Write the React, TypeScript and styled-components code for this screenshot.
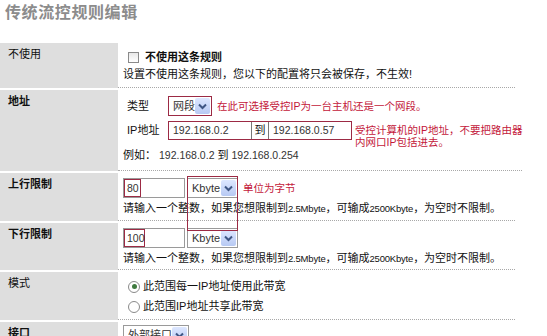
import styled, { createGlobalStyle } from "styled-components";

const GlobalStyle = createGlobalStyle`
  body {
    margin: 0;
    background: #fff;
    font-family: "Liberation Sans", "Noto Sans CJK SC", sans-serif;
    font-size: 11px;
    color: #111;
  }
`;

const MAROON = "#9c2a44";
const RED = "#c3173a";

const Page = styled.div`
  width: 547px;
  height: 336px;
  overflow: hidden;
`;

const Title = styled.h1`
  margin: 0;
  height: 43px;
  box-sizing: border-box;
  padding: 3px 5px 0;
  font-size: 16px;
  line-height: 20px;
  font-weight: bold;
  color: #8c8c8c;
  letter-spacing: 0.6px;
`;

const Table = styled.div`
  width: 515px;
  display: flex;
  flex-direction: column;
  gap: 2px;
`;

const Row = styled.div<{ $h: number }>`
  display: grid;
  grid-template-columns: 118px 1fr;
  height: ${(p) => p.$h}px;
`;

const Label = styled.div<{ $bold?: boolean }>`
  background: #dedede;
  padding: 4px 8px 0;
  line-height: 15px;
  font-weight: ${(p) => (p.$bold ? "bold" : "normal")};
`;

const Content = styled.div<{ $top: number }>`
  border-bottom: 1px dotted #a8a8a8;
  padding: ${(p) => p.$top}px 0 0 5px;
  display: flex;
  flex-direction: column;
  line-height: 15px;
`;

const Line = styled.div<{ $h?: number; $mt?: number; $pl?: number }>`
  display: flex;
  align-items: center;
  height: ${(p) => p.$h ?? 15}px;
  margin-top: ${(p) => p.$mt ?? 0}px;
  padding-left: ${(p) => p.$pl ?? 0}px;
  white-space: nowrap;
`;

const Strong = styled.span`
  font-weight: bold;
`;

const Small = styled.span`
  font-size: 9.5px;
  letter-spacing: -0.2px;
`;

const Num = styled.span`
  font-size: 10.5px;
  color: #333;
  margin: 0 3px;
`;

const Note = styled.span<{ $ml?: number }>`
  color: ${RED};
  font-size: 10.5px;
  margin-left: ${(p) => p.$ml ?? 5}px;
  line-height: 13px;
`;

const Checkbox = styled.span`
  width: 11px;
  height: 11px;
  border: 1px solid #8a8a8a;
  background: linear-gradient(#e8e8e8, #fff);
  margin-right: 6px;
  box-sizing: border-box;
`;

const Radio = styled.span<{ $on?: boolean }>`
  width: 12px;
  height: 12px;
  border-radius: 50%;
  border: 1px solid #8a8a8a;
  box-sizing: border-box;
  background: #fff;
  margin-right: 3px;
  display: flex;
  align-items: center;
  justify-content: center;
  &::after {
    content: "";
    width: 5px;
    height: 5px;
    border-radius: 50%;
    background: ${(p) => (p.$on ? "#3f7a3f" : "transparent")};
  }
`;

const FieldName = styled.span`
  width: 41px;
  padding-left: 4px;
`;

const Select = styled.div<{ $w: number; $mark?: boolean; $ml?: number }>`
  position: relative;
  width: ${(p) => p.$w}px;
  height: 20px;
  margin-left: ${(p) => p.$ml ?? 0}px;
  box-sizing: border-box;
  border: 1px solid ${(p) => (p.$mark ? MAROON : "#9a9a9a")};
  display: flex;
  align-items: center;
  justify-content: space-between;
  padding: 0 1px 0 4px;
  background: #fff;
  font-size: 11px;
  color: #333;
`;

/* red marker drawn over the screenshot, running past the row below */
const Annotation = styled.span`
  position: absolute;
  left: -1px;
  right: -1px;
  top: -3px;
  height: 53px;
  border: 1px solid ${MAROON};
  pointer-events: none;
  z-index: 2;
`;

const ArrowBtn = styled.span`
  width: 15px;
  height: 16px;
  background: linear-gradient(#dde7ff, #b7c9f3);
  border-radius: 2px;
  display: flex;
  align-items: center;
  justify-content: center;
`;

const Chevron = () => (
  <svg width="9" height="7" viewBox="0 0 9 7">
    <path d="M1 1.5 L4.5 5 L8 1.5" fill="none" stroke="#3f5684" strokeWidth="2" />
  </svg>
);

const TextInput = styled.div<{ $w: number }>`
  width: ${(p) => p.$w}px;
  height: 20px;
  box-sizing: border-box;
  border: 1px solid #9a9a9a;
  display: flex;
  align-items: stretch;
  font-size: 10.5px;
  color: #333;
  background: #fff;
`;

const Marked = styled.span<{ $w: number }>`
  width: ${(p) => p.$w}px;
  border: 1px solid ${MAROON};
  display: flex;
  align-items: center;
  padding-left: 2px;
  box-sizing: border-box;
`;

const IpGroup = styled.div`
  display: flex;
  height: 19px;
  border: 1px solid ${MAROON};
  box-sizing: border-box;
  background: #fff;
`;

const IpField = styled.span`
  width: 82px;
  display: flex;
  align-items: center;
  padding-left: 4px;
  box-sizing: border-box;
  font-size: 10.5px;
  color: #333;
`;

const To = styled.span`
  width: 16px;
  border-left: 1px solid #777;
  border-right: 1px solid #777;
  display: flex;
  align-items: center;
  justify-content: center;
`;

const NoteBlock = styled.div`
  color: ${RED};
  font-size: 10.5px;
  line-height: 12px;
  margin-left: 3px;
  margin-top: 3px;
  align-self: flex-start;
`;

const Limit = ({ value, mark }: { value: string; mark: number }) => (
  <TextInput $w={62}>
    <Marked $w={mark}>{value}</Marked>
  </TextInput>
);

const Hint = () => (
  <Line $mt={3}>
    请输入一个整数，如果您想限制到<Small>2.5Mbyte</Small>，可输成
    <Small>2500Kbyte</Small>，为空时不限制。
  </Line>
);

export default function App() {
  return (
    <>
      <GlobalStyle />
      <Page>
        <Title>传统流控规则编辑</Title>
        <Table>
          <Row $h={45}>
            <Label>不使用</Label>
            <Content $top={7}>
              <Line $pl={5}>
                <Checkbox />
                <Strong>不使用这条规则</Strong>
              </Line>
              <Line $mt={2}>设置不使用这条规则，您以下的配置将只会被保存，不生效!</Line>
            </Content>
          </Row>

          <Row $h={81}>
            <Label $bold>地址</Label>
            <Content $top={6}>
              <Line $h={20}>
                <FieldName>类型</FieldName>
                <Select $w={44} $mark>
                  网段
                  <ArrowBtn>
                    <Chevron />
                  </ArrowBtn>
                </Select>
                <Note>在此可选择受控IP为一台主机还是一个网段。</Note>
              </Line>
              <Line $h={19} $mt={5}>
                <FieldName>IP地址</FieldName>
                <IpGroup>
                  <IpField>192.168.0.2</IpField>
                  <To>到</To>
                  <IpField>192.168.0.57</IpField>
                </IpGroup>
                <NoteBlock>
                  受控计算机的IP地址，不要把路由器
                  <br />
                  内网口IP包括进去。
                </NoteBlock>
              </Line>
              <Line $mt={8}>
                例如：<Num>192.168.0.2</Num>到<Num>192.168.0.254</Num>
              </Line>
            </Content>
          </Row>

          <Row $h={48}>
            <Label $bold>上行限制</Label>
            <Content $top={5}>
              <Line $h={20}>
                <Limit value="80" mark={17} />
                <Select $w={51} $ml={2}>
                  Kbyte
                  <ArrowBtn>
                    <Chevron />
                  </ArrowBtn>
                  <Annotation />
                </Select>
                <Note>单位为字节</Note>
              </Line>
              <Hint />
            </Content>
          </Row>

          <Row $h={47}>
            <Label $bold>下行限制</Label>
            <Content $top={5}>
              <Line $h={20}>
                <Limit value="100" mark={21} />
                <Select $w={51} $ml={2}>
                  Kbyte
                  <ArrowBtn>
                    <Chevron />
                  </ArrowBtn>
                </Select>
              </Line>
              <Hint />
            </Content>
          </Row>

          <Row $h={48}>
            <Label>模式</Label>
            <Content $top={7}>
              <Line $pl={5}>
                <Radio $on />
                此范围每一IP地址使用此带宽
              </Line>
              <Line $pl={5} $mt={5}>
                <Radio />
                此范围IP地址共享此带宽
              </Line>
            </Content>
          </Row>

          <Row $h={30}>
            <Label $bold>接口</Label>
            <Content $top={3}>
              <Line $h={20}>
                <Select $w={66}>
                  外部接口
                  <ArrowBtn>
                    <Chevron />
                  </ArrowBtn>
                </Select>
              </Line>
            </Content>
          </Row>
        </Table>
      </Page>
    </>
  );
}
